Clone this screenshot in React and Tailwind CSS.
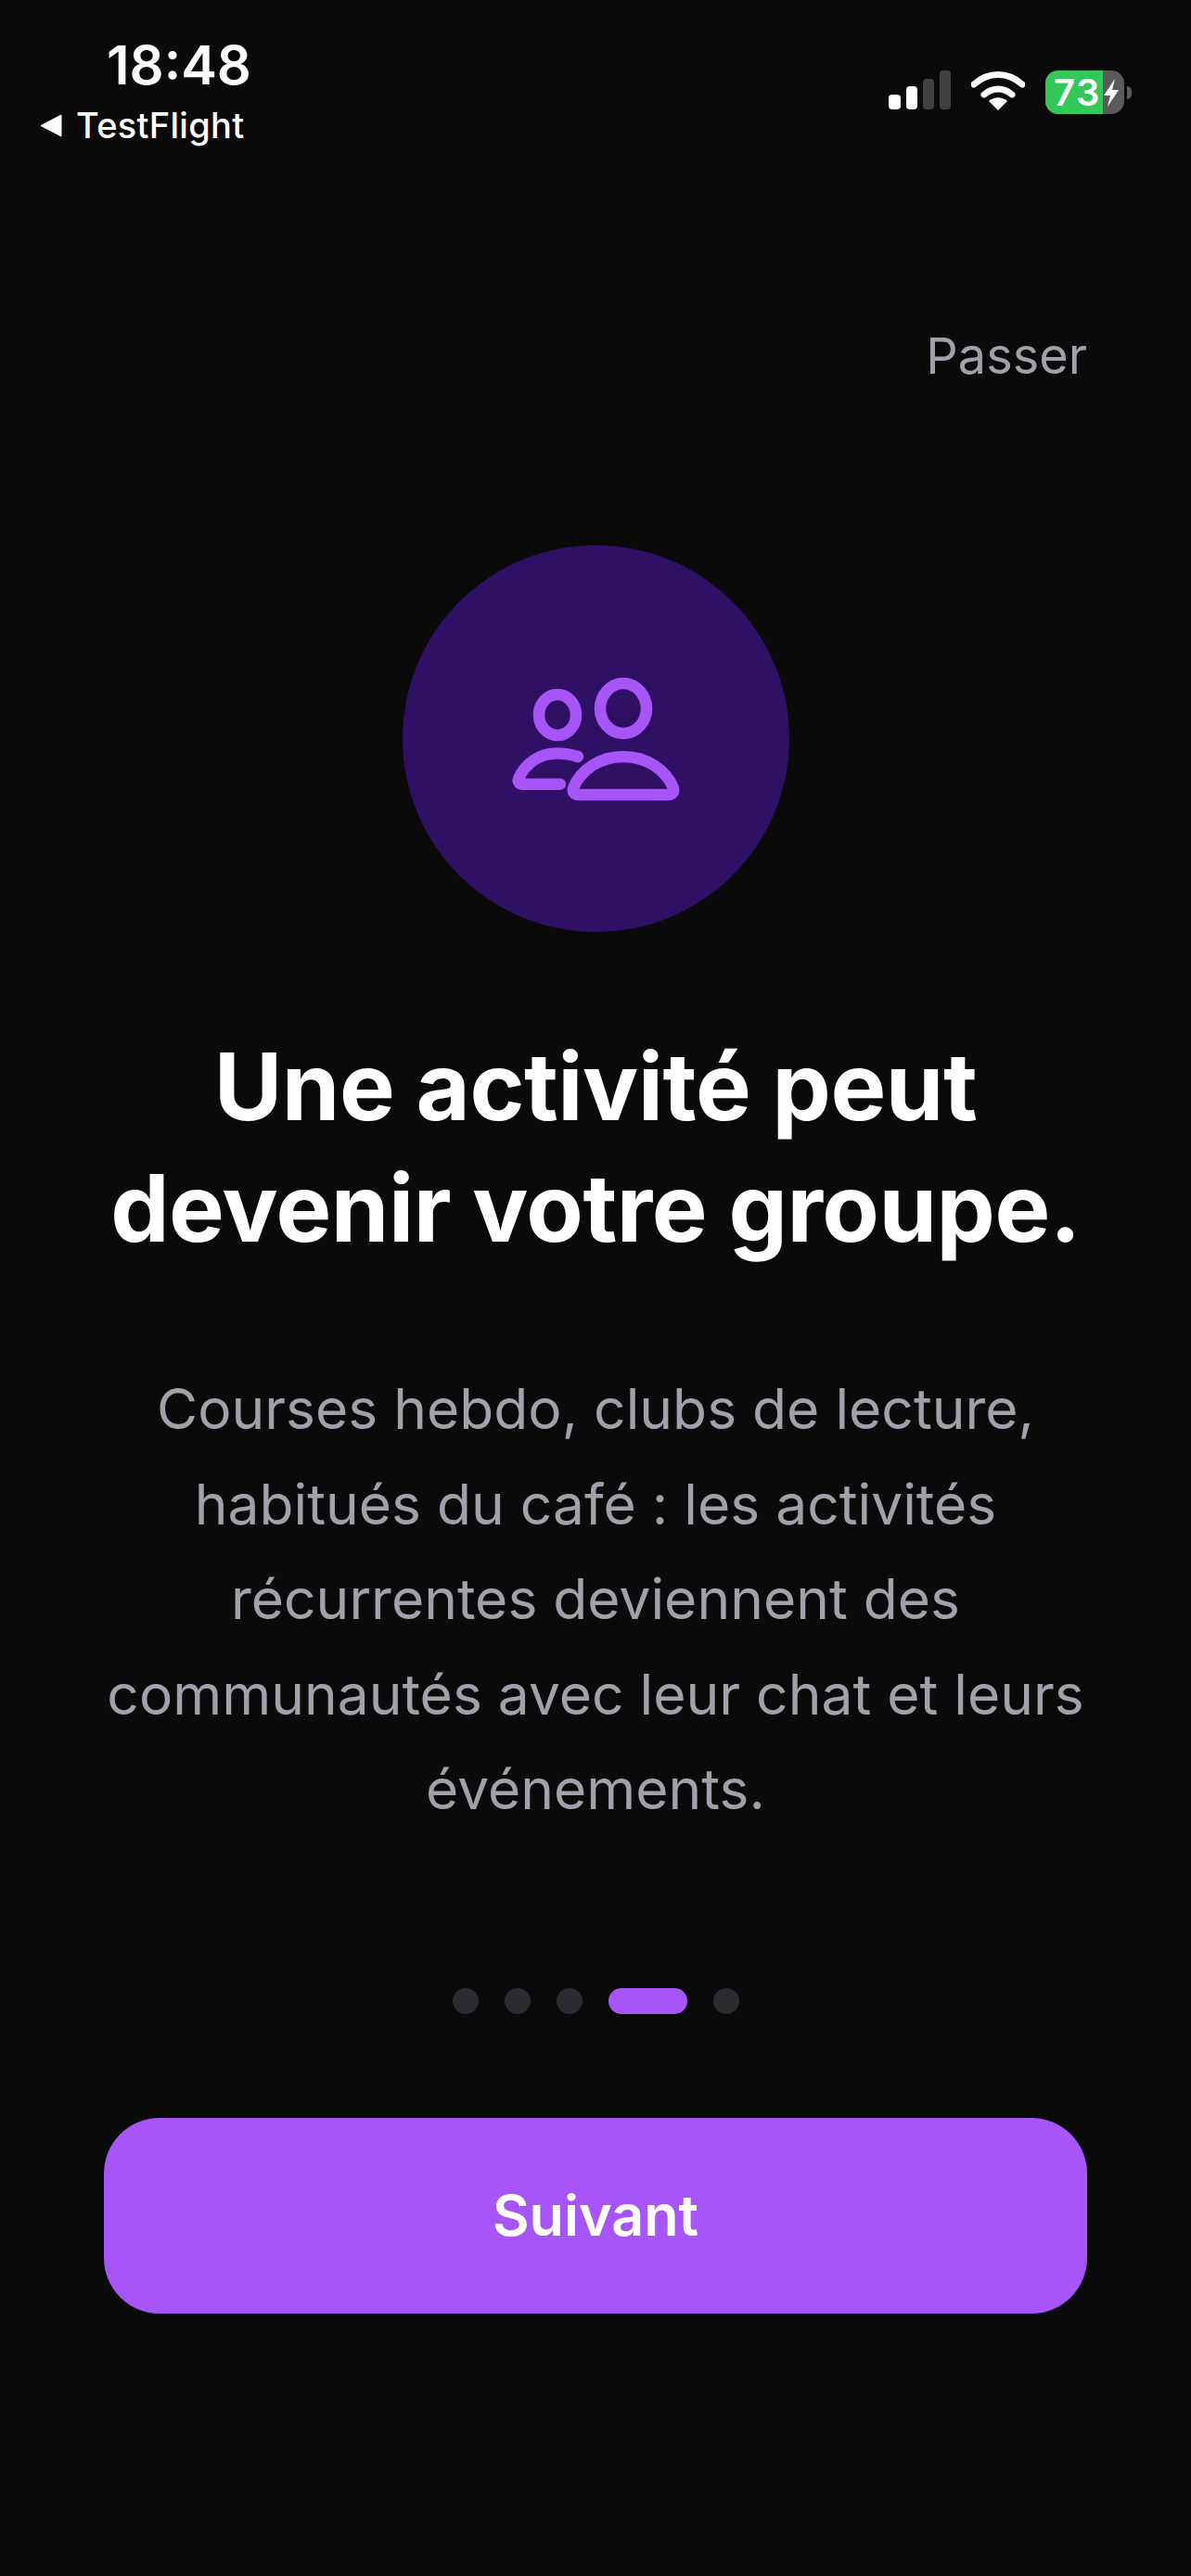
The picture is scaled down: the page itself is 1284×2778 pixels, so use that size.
import React from 'react';

const font = { fontFamily: 'Inter, sans-serif' };

const SignalIcon = () => (
    <svg width="67" height="44" viewBox="0 0 67 44" className="block">
        <rect x="0" y="26" width="13" height="16" rx="4" fill="#fff" />
        <rect x="19" y="17" width="12" height="25" rx="4" fill="#fff" />
        <rect x="37" y="9" width="12" height="33" rx="4" fill="#414141" />
        <rect x="55" y="0" width="12" height="42" rx="4" fill="#414141" />
    </svg>
);

const WifiIcon = () => (
    <svg width="58" height="44" viewBox="0 0 58 44" className="block">
        <path d="M3 15 C18 1 40 1 55 15" fill="none" stroke="#fff" strokeWidth="7" strokeLinecap="round" />
        <path d="M14 26 C23 18 35 18 44 26" fill="none" stroke="#fff" strokeWidth="7" strokeLinecap="round" />
        <path d="M19 33 C25 28 33 28 39 33 L29 43 Z" fill="#fff" />
    </svg>
);

const BatteryIcon = () => (
    <div className="flex items-center gap-[3px]">
        <div className="relative flex h-[47px] w-[85px] overflow-hidden rounded-[14px] bg-[#5a5a5a]">
            <div className="h-full w-[62px] bg-[#34c759]" />
            <span className="absolute left-[9px] top-[0px] text-[40px] font-semibold leading-[47px] tracking-[1.500px] text-white">73</span>
            <svg width="20" height="32" viewBox="0 0 20 32" className="absolute left-[62px] top-[9px]">
                <path d="M13 0 L1 18 H8 L5 30 L17 12 H10 Z" fill="#fff" />
            </svg>
        </div>
        <div className="h-[14px] w-[5px] rounded-r-full bg-[#5a5a5a]" />
    </div>
);

const GroupIcon = () => (
    <svg width="200" height="150" viewBox="-8 7 200 150" className="block" fill="none" stroke="#a855f7" strokeWidth="12.500" strokeLinecap="round" strokeLinejoin="round">
        <ellipse cx="122" cy="49" rx="25" ry="27" />
        <ellipse cx="51" cy="56" rx="20" ry="22" />
        <path d="M74 142 H170 C175 142 177 139 176 135 C168 115 147 101 122 101 C97 101 76 115 68 135 C67 139 69 142 74 142 Z" />
        <path d="M73 101 C66 98.500 58 97.500 50 97.500 C32 97.500 16 108 9 125 C8 128 10 130.700 13 130.700 H54" />
    </svg>
);

const Dot = () => <div className="h-[28px] w-[28px] rounded-full bg-[#2c2c30]" />;

const App = () => {
    return (
        <div className="flex h-[2778px] w-full flex-col overflow-hidden bg-[#0a0a0a] text-white" style={font}>
            {/* status bar */}
            <div className="flex h-[170px] justify-between pl-[43px] pr-[64px] pt-[38px]">
                <div>
                    <div className="pl-[72px] text-[58px] font-semibold leading-[65px]">18:48</div>
                    <div className="mt-[10px] flex items-center gap-[14px]">
                        <svg width="25" height="25" viewBox="0 0 25 25" className="block">
                            <path d="M1 12.500 L23 1 V24 Z" fill="#fff" stroke="#fff" strokeWidth="1" strokeLinejoin="round" />
                        </svg>
                        <span className="text-[38px] font-medium leading-[44px] tracking-[0.300px]">TestFlight</span>
                    </div>
                </div>
                <div className="flex items-start gap-[22px] pt-[38px]">
                    <SignalIcon />
                    <WifiIcon />
                    <BatteryIcon />
                </div>
            </div>

            {/* skip */}
            <div className="mt-[182px] flex justify-end pr-[112px]">
                <span className="text-[54px] leading-[64px] text-[#a1a1aa]">Passer</span>
            </div>

            {/* illustration */}
            <div className="mt-[172px] flex justify-center">
                <div className="flex h-[417px] w-[417px] items-center justify-center rounded-full bg-[#2e1065]">
                    <GroupIcon />
                </div>
            </div>

            {/* copy */}
            <h1 className="mt-[101px] text-center text-[100.500px] font-bold leading-[131px] tracking-[-0.500px]">
                Une activité peut<br />devenir votre groupe.
            </h1>
            <p className="mt-[100px] text-center text-[60.500px] leading-[102.600px] text-[#a1a1aa]">
                Courses hebdo, clubs de lecture,<br />
                habitués du café : les activités<br />
                récurrentes deviennent des<br />
                communautés avec leur chat et leurs<br />
                événements.
            </p>

            {/* pager */}
            <div className="mt-[163px] flex items-center justify-center gap-[28px]">
                <Dot />
                <Dot />
                <Dot />
                <div className="h-[28px] w-[85px] rounded-full bg-[#a855f7]" />
                <Dot />
            </div>

            {/* next */}
            <div className="mt-[112px] px-[112px]">
                <div className="flex h-[211px] items-center justify-center rounded-[60px] bg-[#a855f7] text-[61px] font-semibold">
                    Suivant
                </div>
            </div>
        </div>
    );
};

export default App;
